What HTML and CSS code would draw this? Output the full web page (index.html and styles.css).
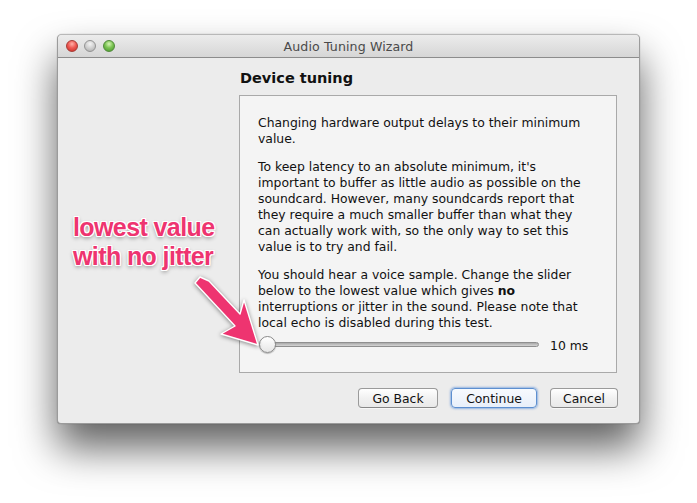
FILE: index.html
```html
<!DOCTYPE html>
<html>
<head>
<meta charset="utf-8">
<title>Audio Tuning Wizard</title>
<link rel="stylesheet" href="styles.css">
</head>
<body>
<div class="window">
  <div class="titlebar">
    <div class="lights">
      <span class="light red"></span>
      <span class="light gray"></span>
      <span class="light green"></span>
    </div>
    <div class="title">Audio Tuning Wizard</div>
  </div>
  <div class="content">
    <h1 class="heading">Device tuning</h1>
    <div class="panel">
      <p class="para">Changing hardware output delays to their minimum<br>value.</p>
      <p class="para">To keep latency to an absolute minimum, it's<br>important to buffer as little audio as possible on the<br>soundcard. However, many soundcards report that<br>they require a much smaller buffer than what they<br>can actually work with, so the only way to set this<br>value is to try and fail.</p>
      <p class="para">You should hear a voice sample. Change the slider<br>below to the lowest value which gives <b>no</b><br>interruptions or jitter in the sound. Please note that<br>local echo is disabled during this test.</p>
      <div class="slider-row">
        <div class="slider">
          <div class="track"></div>
          <div class="knob"></div>
        </div>
        <span class="slider-value">10 ms</span>
      </div>
    </div>
    <div class="buttons">
      <button class="btn btn-back">Go Back</button>
      <button class="btn btn-default">Continue</button>
      <button class="btn btn-cancel">Cancel</button>
    </div>
  </div>
</div>

<div class="note">lowest value<br>with no jitter</div>
<svg class="arrow" width="80" height="82" viewBox="185 270 80 82">
  <polygon points="195,283 200,277 209,281 240,314 244,300 258,345 221,334 235,326" fill="#ee3470" stroke="#ffffff" stroke-width="1.4" stroke-linejoin="round"/>
</svg>
</body>
</html>
```

FILE: styles.css
```css
html, body {
  margin: 0;
  padding: 0;
  background: #ffffff;
}

body {
  position: relative;
  width: 697px;
  height: 503px;
  overflow: hidden;
  padding: 34px 0 0 57px;
  box-sizing: border-box;
  font-family: "DejaVu Sans", "Liberation Sans", sans-serif;
}

.window {
  width: 583px;
  height: 390px;
  box-sizing: border-box;
  background: #ececec;
  border: 1px solid #9b9b9b;
  border-top-color: #b8b8b8;
  border-radius: 5px 5px 4px 4px;
  box-shadow: 0 24px 40px rgba(0, 0, 0, 0.62), 0 0 1px rgba(0,0,0,0.4);
  display: flex;
  flex-direction: column;
  overflow: hidden;
}

.titlebar {
  position: relative;
  height: 22px;
  flex: none;
  background: linear-gradient(#ececec, #d6d6d6);
  border-bottom: 1px solid #8c8c8c;
  display: flex;
  align-items: center;
  justify-content: center;
}

.lights {
  position: absolute;
  left: 8px;
  top: 5px;
  display: flex;
  gap: 6px;
}

.light {
  width: 12px;
  height: 12px;
  border-radius: 50%;
  box-sizing: border-box;
}

.light.red {
  background: radial-gradient(circle at 50% 30%, #ffb0a8 0%, #ef5b55 45%, #c72a23 100%);
  border: 1px solid #a63b35;
}

.light.gray {
  background: radial-gradient(circle at 50% 30%, #f4f4f4 0%, #d0d0d0 50%, #a9a9a9 100%);
  border: 1px solid #939393;
}

.light.green {
  background: radial-gradient(circle at 50% 30%, #d6f5b6 0%, #7cc453 45%, #44962a 100%);
  border: 1px solid #50893a;
}

.light + .light.green {
  margin-left: 1px;
}

.title {
  font-size: 12.6px;
  color: #4a4a4a;
  letter-spacing: 0.1px;
}

.content {
  flex: 1;
  display: flex;
  flex-direction: column;
  padding: 11px 21px 0 182px;
}

.heading {
  margin: 0;
  font-size: 14.5px;
  line-height: 18px;
  font-weight: bold;
  color: #111;
}

.panel {
  margin-top: 8px;
  margin-left: -1px;
  height: 278px;
  box-sizing: border-box;
  background: #f4f4f4;
  border: 1px solid #a9a9a9;
  padding: 19px 26px 0 18px;
  margin-right: 1px;
}

.para {
  margin: 0 0 12px 0;
  font-size: 12.4px;
  line-height: 16px;
  color: #111;
  white-space: nowrap;
}

.para:last-of-type {
  margin-bottom: 4px;
}

.para b {
  font-weight: bold;
}

.slider-row {
  display: flex;
  align-items: center;
  height: 20px;
}

.slider {
  position: relative;
  width: 280px;
  height: 20px;
  margin-left: 1px;
}

.track {
  position: absolute;
  left: 3px;
  right: 0;
  top: 7px;
  height: 5px;
  box-sizing: border-box;
  border-radius: 3px;
  background: linear-gradient(#a9a9a9, #d4d4d4);
  border: 1px solid #8f8f8f;
}

.knob {
  position: absolute;
  left: 0;
  top: 1px;
  width: 17px;
  height: 17px;
  box-sizing: border-box;
  border-radius: 50%;
  border: 1px solid #8a8a8a;
  background: linear-gradient(#ffffff, #e6e6e6);
  box-shadow: 0 1px 1px rgba(0,0,0,0.25);
}

.slider-value {
  margin-left: 11px;
  font-size: 12.4px;
  color: #111;
}

.buttons {
  margin-top: 15px;
  display: flex;
  justify-content: flex-end;
  gap: 13px;
}

.btn {
  height: 20px;
  box-sizing: border-box;
  padding: 0;
  font-family: "DejaVu Sans", "Liberation Sans", sans-serif;
  font-size: 12.4px;
  color: #111;
  background: linear-gradient(#ffffff, #f1f1f1 50%, #e9e9e9);
  border: 1px solid #9a9a9a;
  border-bottom-color: #878787;
  border-radius: 4px;
  box-shadow: 0 1px 0 rgba(255,255,255,0.6);
}

.btn-back { width: 80px; }
.btn-default {
  width: 86px;
  border-color: #5d8fd0;
  background: linear-gradient(#f7fafe, #e8effa);
  box-shadow: 0 0 2px 1px rgba(110, 155, 220, 0.7);
}
.btn-cancel { width: 68px; }

.note {
  position: absolute;
  left: 73px;
  top: 213px;
  font-family: "Liberation Sans", Arial, sans-serif;
  font-weight: bold;
  font-size: 25px;
  line-height: 29px;
  letter-spacing: -0.6px;
  color: #ee3470;
  text-shadow:
    1px 0 0 #fff, -1px 0 0 #fff, 0 1px 0 #fff, 0 -1px 0 #fff,
    1px 1px 0 #fff, -1px -1px 0 #fff, 1px -1px 0 #fff, -1px 1px 0 #fff,
    0 2px 4px rgba(0, 0, 0, 0.45);
}

.arrow {
  position: absolute;
  left: 185px;
  top: 270px;
  filter: drop-shadow(0 1px 2px rgba(0,0,0,0.45));
}
```
